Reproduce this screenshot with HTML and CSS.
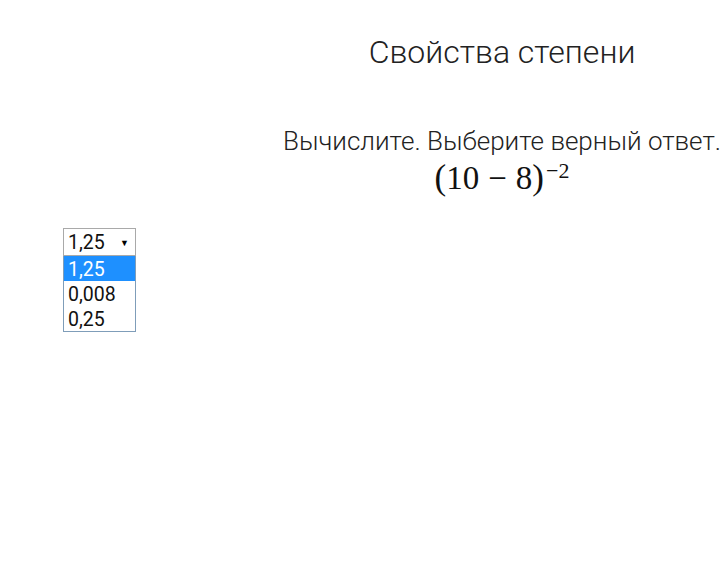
FILE: index.html
```html
<!DOCTYPE html>
<html lang="ru">
<head>
<meta charset="utf-8">
<link rel="stylesheet" href="styles.css">
</head>
<body>
<div class="content">
  <h1 class="title">Свойства степени</h1>
  <p class="question">Вычислите. Выберите верный ответ.</p>
  <div class="math"><span class="paren">(</span>10<span class="minus">−</span>8<span class="paren">)</span><sup class="exp">−2</sup></div>
</div>
<div class="answer">
  <div class="select"><span class="select-value">1,25</span><span class="arrow">▼</span></div>
  <div class="options">
    <div class="option selected">1,25</div>
    <div class="option">0,008</div>
    <div class="option">0,25</div>
  </div>
</div>
</body>
</html>
```
FILE: styles.css
```css
html, body {
  margin: 0;
  padding: 0;
  background: #fff;
}
body {
  font-family: Roboto, "Noto Sans", sans-serif;
  color: #222;
  width: 725px;
  height: 574px;
  overflow: hidden;
}
.content {
  padding-left: 279px;
  text-align: center;
}
.title {
  margin: 0;
  padding-top: 32px;
  font-size: 32px;
  font-weight: 300;
  line-height: 40px;
  color: #222;
}
.question {
  margin: 0;
  margin-top: 54px;
  font-size: 26px;
  font-weight: 300;
  line-height: 30px;
  color: #222;
}
.math {
  margin-top: 3px;
  font-family: "Liberation Serif", "DejaVu Serif", serif;
  font-size: 33px;
  line-height: 38px;
  color: #111;
}
.paren { font-size: 35px; }
.minus { padding: 0 9px; }
.exp {
  padding-left: 2px;
  font-size: 22px;
  vertical-align: 11px;
  line-height: 0;
}
.answer {
  margin-top: 31px;
  margin-left: 63px;
  width: 73px;
}
.select {
  box-sizing: border-box;
  height: 28px;
  border: 1px solid #a9a9a9;
  display: flex;
  align-items: center;
  justify-content: space-between;
  padding: 1px 6px 0 4px;
  font-size: 19.5px;
  color: #111;
}
.arrow {
  font-size: 9px;
  color: #000;
}
.options {
  border: 1px solid #7f9db9;
  border-top: 0;
}
.option {
  height: 25px;
  line-height: 27px;
  padding-left: 4px;
  font-size: 19.5px;
  color: #111;
}
.option.selected {
  background: #1e90ff;
  color: #fff;
}
```
